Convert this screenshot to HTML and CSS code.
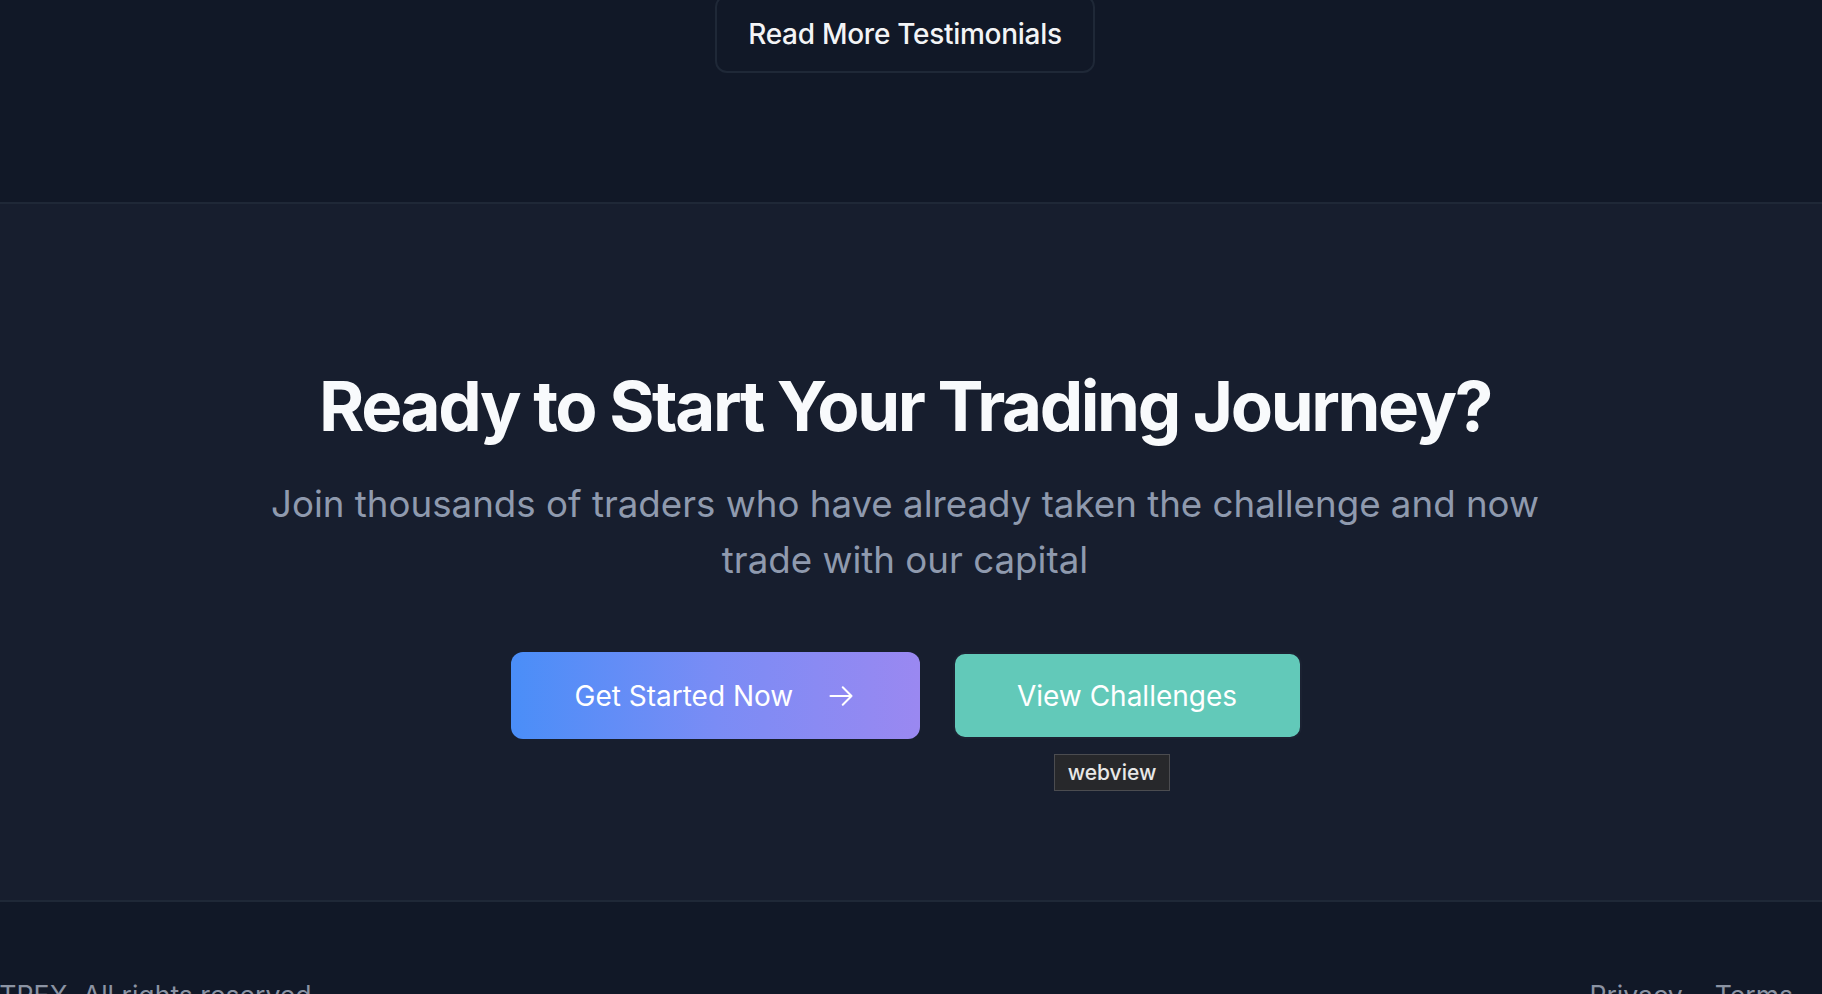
FILE: index.html
```html
<!DOCTYPE html>
<html lang="en">
<head>
<meta charset="utf-8">
<title>Ready to Start Your Trading Journey?</title>
<link rel="stylesheet" href="styles.css">
</head>
<body>
<section class="testimonials">
  <a class="btn-outline" href="#">Read More Testimonials</a>
</section>

<section class="cta">
  <h2 class="cta-title">Ready to Start Your Trading Journey?</h2>
  <p class="cta-sub">Join thousands of traders who have already taken the challenge and now trade with our capital</p>
  <div class="cta-actions">
    <a class="btn-primary" href="#">
      <span>Get Started Now</span>
      <svg class="arrow" viewBox="0 0 24 24" fill="none" stroke="currentColor" stroke-width="1.8" stroke-linecap="round" stroke-linejoin="round"><path d="M13.5 4.5 21 12l-7.5 7.5M21 12H3"/></svg>
    </a>
    <a class="btn-teal" href="#">View Challenges</a>
  </div>
  <div class="tooltip">webview</div>
</section>

<footer class="footer">
  <div class="footer-inner">
    <p class="copyright">© 2024 TREX. All rights reserved</p>
    <nav class="footer-links">
      <a href="#">Privacy</a>
      <a href="#">Terms</a>
    </nav>
  </div>
</footer>
</body>
</html>
```

FILE: styles.css
```css
* { box-sizing: border-box; }

html, body {
  margin: 0;
  padding: 0;
  background: #111827;
  font-family: Inter, "Noto Sans", "Liberation Sans", sans-serif;
  overflow: hidden;
}

body {
  position: relative;
  width: 1822px;
  height: 994px;
}

a { text-decoration: none; }

.testimonials {
  background: #111827;
  display: flex;
  justify-content: center;
  margin-top: -5px;
  padding: 0 12px 129px 0;
  border-bottom: 2px solid #1f2837;
}

.btn-outline {
  display: flex;
  align-items: center;
  justify-content: center;
  width: 380px;
  height: 78px;
  border: 2px solid #1f2837;
  border-radius: 12px;
  color: #f3f4f6;
  font-size: 28px;
  font-weight: 500;
  letter-spacing: -0.01em;
}

.cta {
  position: relative;
  background: #171e2e;
  padding: 160px 12px 161px 0;
  display: flex;
  flex-direction: column;
  align-items: center;
  border-bottom: 2px solid #1f2837;
}

.cta-title {
  margin: 0;
  color: #f8fafc;
  font-size: 69px;
  line-height: 84px;
  font-weight: 700;
  letter-spacing: -0.0346em;
}

.cta-sub {
  margin: 28px 0 0;
  max-width: 1300px;
  text-align: center;
  color: #8f9aae;
  font-size: 36.7px;
  line-height: 56px;
  font-weight: 400;
}

.cta-actions {
  margin-top: 64px;
  display: flex;
  align-items: center;
  gap: 35px;
}

.btn-primary {
  display: flex;
  align-items: center;
  gap: 34px;
  width: 409px;
  height: 87px;
  padding-left: 64px;
  border-radius: 12px;
  background: linear-gradient(90deg, #4a8ef8 0%, #7a8cf5 50%, #9a88f1 100%);
  color: #ffffff;
  font-size: 28px;
  font-weight: 400;
}

.arrow {
  width: 28px;
  height: 28px;
}

.btn-teal {
  display: flex;
  align-items: center;
  justify-content: center;
  width: 345px;
  height: 83px;
  border-radius: 10px;
  background: #62c9b9;
  box-shadow: 0 0 0 2px #1b2232;
  color: #ffffff;
  font-size: 28px;
  font-weight: 400;
}

.tooltip {
  position: absolute;
  left: 1054px;
  top: 550px;
  width: 116px;
  height: 37px;
  display: flex;
  align-items: center;
  justify-content: center;
  background: #27282b;
  border: 1px solid #4b4c50;
  color: #e8e8e8;
  font-size: 21px;
  font-weight: 500;
}

.footer {
  background: #111827;
  padding-top: 75px;
}

.footer-inner {
  display: flex;
  justify-content: space-between;
  padding-right: 29px;
}

.copyright {
  margin: 0 0 0 -106px;
  color: #8b93a3;
  font-size: 26.6px;
  line-height: 37px;
}

.footer-links {
  display: flex;
  gap: 32px;
}

.footer-links a {
  color: #8b93a3;
  font-size: 26.6px;
  line-height: 37px;
}
```
